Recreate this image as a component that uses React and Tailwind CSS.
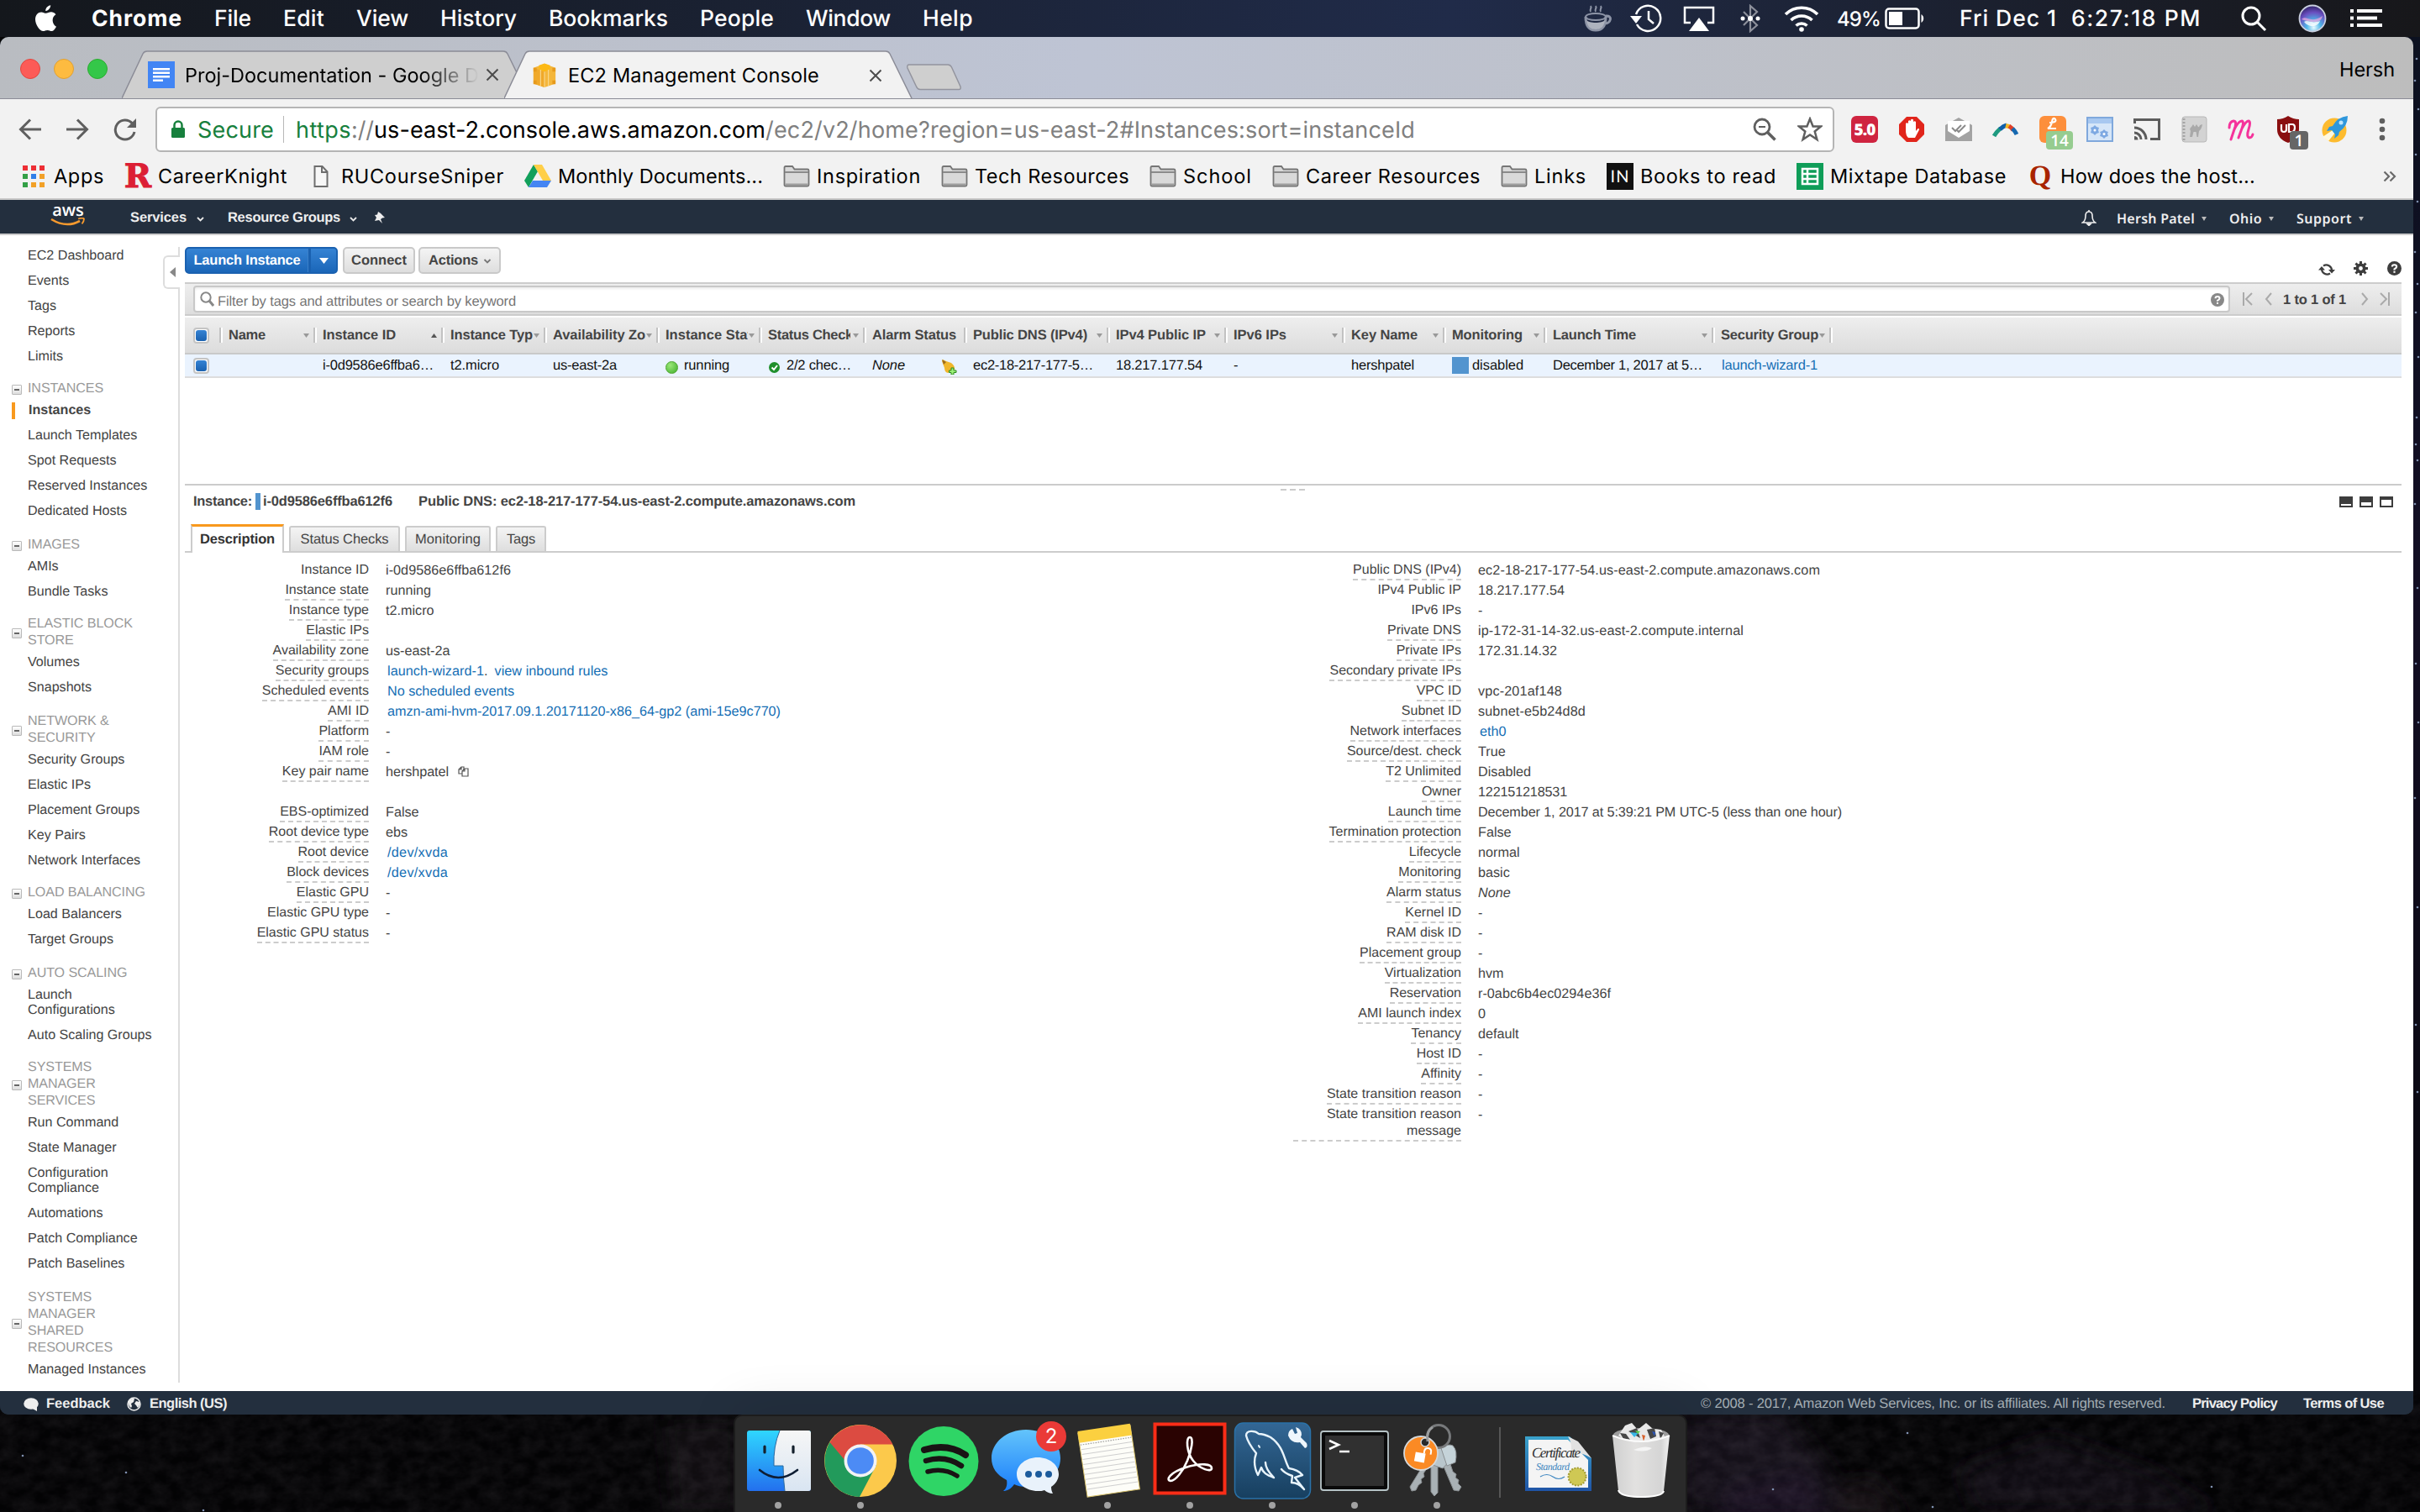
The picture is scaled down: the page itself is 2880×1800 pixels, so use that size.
import React, { useLayoutEffect, useRef } from "react";

/* Text that is tracked so that it fills exactly `w` pixels. */
function Fit({ w, className = "", children }) {
  const ref = useRef(null);
  useLayoutEffect(() => {
    const el = ref.current;
    el.style.letterSpacing = "0px";
    const natural = el.getBoundingClientRect().width;
    const n = el.textContent.length;
    el.style.letterSpacing = `${(w - natural) / n}px`;
  }, [w, children]);
  return (
    <span ref={ref} className={"inline-block shrink-0 whitespace-pre " + className}>
      {children}
    </span>
  );
}

/* ---------- desktop ---------- */

const stars = [
  [2876, 70], [2874, 96], [2878, 130], [2875, 184], [2877, 240], [2874, 300], [2877, 338], [2875, 372], [2878, 425],
  [2876, 497], [2875, 529], [2877, 548], [2874, 600], [2877, 700], [2875, 790], [2878, 860], [2874, 950], [2877, 1080],
  [2875, 1220], [2877, 1300], [2110, 1773], [2270, 1706], [2300, 1794], [2632, 1770], [150, 1753], [242, 1798], [27, 1733],
];

function Wallpaper() {
  return (
    <svg className="absolute inset-0" width="2880" height="1800" viewBox="0 0 2880 1800" aria-hidden="true">
      <defs>
        <filter id="grain" x="0" y="0" width="100%" height="100%" colorInterpolationFilters="sRGB">
          <feTurbulence type="fractalNoise" baseFrequency="0.05 0.07" numOctaves="4" seed="4" />
          <feColorMatrix values="0.2 0 0 0 -0.055  0.19 0 0 0 -0.055  0.2 0 0 0 -0.05  0 0 0 0 0.5" />
        </filter>
        <filter id="soft"><feGaussianBlur stdDeviation="12" /></filter>
        <linearGradient id="edge" x1="0" y1="0" x2="0" y2="1">
          <stop offset="0" stopColor="#0c1120" />
          <stop offset="0.4" stopColor="#130e24" />
          <stop offset="1" stopColor="#07070b" />
        </linearGradient>
      </defs>
      <rect width="2880" height="1800" fill="#060607" />
      <rect x="2860" y="40" width="20" height="1650" fill="url(#edge)" />
      <g filter="url(#soft)">
        <path d="M2000 1680H2120L2170 1740 2200 1800H2000Z" fill="#2a2230" />
        <path d="M2060 1770L2150 1750 2180 1810H2040Z" fill="#32243f" />
        <path d="M2180 1770L2230 1760 2270 1810H2190Z" fill="#261f22" />
        <path d="M2330 1750L2440 1710 2560 1750 2640 1800H2350Z" fill="#1c1820" />
        <path d="M790 1690H880V1800H800Z" fill="#221e24" />
      </g>
      <rect y="1660" width="2880" height="140" filter="url(#grain)" />
      {stars.map(([x, y]) => (
        <circle key={x + "-" + y} cx={x} cy={y} r="1.3" fill="#7f90b0" />
      ))}
    </svg>
  );
}

/* ---------- menu bar ---------- */

const menus = [
  ["Chrome", 108], ["File", 44], ["Edit", 49], ["View", 62], ["History", 91],
  ["Bookmarks", 142], ["People", 88], ["Window", 101], ["Help", 60],
];

function MenuBar() {
  return (
    <div className="relative flex h-11 w-full shrink-0 items-center bg-linear-to-r from-[#14171c] via-[#202b49] via-60% to-[#17171a] pl-[41px] text-[26.5px] text-white">
      <svg width="28" height="32" viewBox="0 0 28 32" fill="#fff">
        <path d="M19.2 0.3c.3 2.600-2.800 6.900-5.900 6.600C12.900 4 16.100.700 19.200.3zM26 25.800c-1.600 3-3.400 5.300-5.500 5.300-1.900 0-2.600-1.200-5-1.200-2.500 0-3.300 1.200-5 1.200C6.100 31.100 1 22.800 1 17c0-5.500 3.500-8.600 7.100-8.600 2.200 0 4.100 1.400 5.700 1.400 1.500 0 3.600-1.500 6.200-1.500 1.700 0 4 .8 5.400 2.900-5.600 3.300-4.500 11.600.6 14.600z" />
      </svg>
      <div className="ml-10 flex gap-[38px] pt-[2px]">
        {menus.map(([label, w], i) => (
          <Fit key={label} w={w} className={i === 0 ? "font-bold" : "font-medium"}>{label}</Fit>
        ))}
      </div>
      <div className="ml-auto flex h-11 items-center pr-[45px]">
        <svg width="40" height="34" viewBox="0 0 40 34" fill="none" stroke="#8d94a6">
          <ellipse cx="17" cy="15" rx="12" ry="4" strokeWidth="2" />
          <path d="M5 15c0 10 4 16 12 16s12-6 12-16M29 14c8-1 7 9-2 9" strokeWidth="3" />
          <path d="M6 19c3 4 19 4 22 0-1 7-4 11-11 11S7 26 6 19z" fill="#aeb3be" stroke="none" />
          <path d="M11 9c-2-3 2-4 0-7M17 9c-2-3 2-4 0-7M23 9c-2-3 2-4 0-7" strokeWidth="2" />
        </svg>
        <svg className="ml-[18px]" width="40" height="34" viewBox="0 0 40 34" fill="none" stroke="#fff" strokeWidth="2.500">
          <path d="M7 12A15 15 0 1 1 8 24" />
          <path d="M22 8v10l6 5" />
          <path d="M0 14h14l-7 9z" fill="#fff" stroke="none" />
        </svg>
        <svg className="ml-[22px]" width="40" height="32" viewBox="0 0 40 32">
          <path d="M10 21H3V3h34v18h-7" fill="none" stroke="#fff" strokeWidth="2.500" />
          <path d="M20 15L32 31H8z" fill="#fff" />
        </svg>
        <svg className="ml-[28px]" width="26" height="34" viewBox="0 0 26 34">
          <path d="M5 9l16 16-8 7V2l8 7L5 25" fill="none" stroke="#8d909b" strokeWidth="2.200" />
          <circle cx="4" cy="17" r="2.500" fill="#fff" /><circle cx="13" cy="17" r="3" fill="#fff" /><circle cx="22" cy="17" r="2.500" fill="#fff" />
        </svg>
        <svg className="ml-[26px]" width="44" height="32" viewBox="0 0 44 32" fill="none" stroke="#fff" strokeWidth="3.600">
          <path d="M3 11a27 27 0 0 1 38 0M9.500 18a18 18 0 0 1 25 0M15.500 24.500a9.500 9.500 0 0 1 13 0" />
          <circle cx="22" cy="29" r="2.800" fill="#fff" stroke="none" />
        </svg>
        <Fit w={52} className="ml-5 pt-px text-[24px] font-medium">49%</Fit>
        <svg className="ml-[5px]" width="48" height="26" viewBox="0 0 48 26">
          <rect x="1.500" y="1.500" width="39" height="23" rx="3.500" fill="none" stroke="#fff" strokeWidth="2.500" />
          <rect x="5" y="5" width="16" height="16" fill="#fff" />
          <path d="M43.500 8a6 6 0 0 1 0 10z" fill="#fff" />
        </svg>
        <Fit w={116} className="ml-[41px] pt-[2px] font-medium">Fri Dec 1</Fit>
        <Fit w={155} className="ml-[17px] pt-[2px] font-medium">6:27:18 PM</Fit>
        <svg className="ml-[46px]" width="32" height="32" viewBox="0 0 32 32" fill="none" stroke="#fff" strokeWidth="3">
          <circle cx="13" cy="13" r="10" /><path d="M20 20l10 10" />
        </svg>
        <svg className="ml-[37px]" width="34" height="34" viewBox="0 0 34 34">
          <defs>
            <radialGradient id="siri" cx="0.55" cy="0.85" r="0.9">
              <stop offset="0" stopColor="#e9fbff" /><stop offset="0.3" stopColor="#4fb6e8" />
              <stop offset="0.65" stopColor="#6a4fc0" /><stop offset="1" stopColor="#241a55" />
            </radialGradient>
          </defs>
          <circle cx="17" cy="17" r="15.500" fill="url(#siri)" stroke="#c9cfdf" strokeWidth="1.800" />
          <path d="M4 18c6-6 10 6 25-4-2 10-14 8-25 4z" fill="#f6a8e0" opacity="0.7" />
          <path d="M7 21c5-3 8 3 19-1-3 8-14 8-19 1z" fill="#fff" opacity="0.8" />
        </svg>
        <svg className="ml-[28px]" width="38" height="22" viewBox="0 0 38 22" fill="#fff">
          <path d="M0 0h4v4H0zM8 0h30v4H8zM0 8.500h4v4H0zM8 8.500h24v4H8zM0 17h4v4H0zM8 17h30v4H8z" />
        </svg>
      </div>
    </div>
  );
}

/* ---------- browser chrome ---------- */

function TabShape({ fill, line }) {
  return (
    <svg className="absolute inset-0" width="486" height="57" viewBox="0 0 486 57" aria-hidden="true">
      <path d="M0 57L25 4Q26.500 1 30 1H454Q457.500 1 459 4L485 57" fill={fill} stroke={line} strokeWidth="1.500" />
    </svg>
  );
}

function CloseX({ className = "" }) {
  return (
    <svg className={className} width="16" height="16" viewBox="0 0 16 16" stroke="#4c4c4c" strokeWidth="2">
      <path d="M1.500 1.500l13 13M14.500 1.500l-13 13" />
    </svg>
  );
}

function TabStrip() {
  return (
    <div className="flex h-[74px] shrink-0 items-end border-b-[1.500px] border-[#8b8c97] bg-linear-to-r from-[#b9bcc1] via-[#bec4d4] via-45% to-[#bdbdbd]">
      <div className="flex gap-4 self-center pt-[2px] pl-6">
        <span className="size-6 rounded-full border border-[#e2463f] bg-[#fc5b57]" />
        <span className="size-6 rounded-full border border-[#e0a032] bg-[#fdbb40]" />
        <span className="size-6 rounded-full border border-[#2bac2f] bg-[#34c749]" />
      </div>
      <div className="relative ml-[17px] flex h-[57px] w-[486px] items-center">
        <TabShape fill="#cfcfcf" line="#8b8c97" />
        <svg className="relative ml-[31px]" width="32" height="32" viewBox="0 0 32 32">
          <rect width="32" height="32" fill="#4285f4" />
          <path d="M6 8h20v2.500H6zM6 12.500h20V15H6zM6 17h20v2.500H6zM6 21.500h12V24H6z" fill="#fff" />
        </svg>
        <div className="relative ml-[12px] h-8 w-[350px] overflow-hidden mask-r-from-80% text-[23.500px] leading-[33px]">
          <Fit w={350} className="text-black">Proj-Documentation - Google D</Fit>
        </div>
        <CloseX className="relative ml-[8px]" />
      </div>
      <div className="relative -mb-[2px] -ml-[31px] flex h-[59px] w-[486px] items-center">
        <TabShape fill="#f2f2f2" line="#8b8c97" />
        <svg className="relative ml-[33px]" width="30" height="30" viewBox="0 0 30 32">
          <path d="M1 6l14-5 14 5v20l-14 5L1 26z" fill="#f4b63b" />
          <path d="M1 6l14 5v20L1 26z" fill="#f0a92a" />
          <path d="M8 3l7-2.500L22 3v5l-7 3-7-3z" fill="#fdb913" />
          <path d="M1 6h4v5H1zM25 6h4v5h-4zM1 22h4v5H1zM25 22h4v5h-4z" fill="#e79a1c" />
          <path d="M10 8.500v21M15 11v20M20 8.500v21" stroke="#fbe0a0" strokeWidth="1" />
        </svg>
        <Fit w={299} className="relative ml-[13px] text-[23.500px]">EC2 Management Console</Fit>
        <CloseX className="relative ml-[59px]" />
      </div>
      <svg className="-ml-2 mb-[9px]" width="68" height="32" viewBox="0 0 68 32">
        <path d="M4 1H50Q53 1 54.500 4L65 27Q66 30.500 63 30.500H17Q14 30.500 12.500 27L2 5Q1 1 4 1Z" fill="#cfcfcf" stroke="#93949e" strokeWidth="1.500" />
      </svg>
      <Fit w={66} className="mr-[22px] ml-auto self-center pt-[4px] text-[23.500px]">Hersh</Fit>
    </div>
  );
}

function Extensions() {
  return (
    <div className="ml-5 flex items-center gap-6">
      <span className="flex size-8 items-center justify-center rounded-md bg-[#cf2440] font-['Open_Sans'] text-[19px] font-extrabold tracking-tighter text-white">5.0</span>
      <svg width="32" height="32" viewBox="0 0 32 32">
        <path d="M10 1h12l9 9v12l-9 9H10l-9-9V10z" fill="#e1251b" />
        <path d="M9 18V9q1.500-1.500 3 0v6-9q1.500-1.500 3 0v8-9.500q1.500-1.500 3 0V14 7q1.500-1.500 3 0v11l2.500-3q2-.5 1.500 1.500L20 26h-8q-3-3-3-8z" fill="#fff" />
      </svg>
      <svg width="32" height="28" viewBox="0 0 32 28">
        <path d="M0 9L16 0l16 9v19H0z" fill="#a3a3a3" />
        <path d="M3 4h26v12l-13 8L3 16z" fill="#fff" />
        <path d="M8 12l4 4 7-7M14 15l2 2 8-8" fill="none" stroke="#8a8a8a" strokeWidth="2" />
      </svg>
      <svg width="32" height="32" viewBox="0 0 32 32" fill="none" strokeWidth="5">
        <path d="M2 24Q5 19 10 14.500" stroke="#1e9a80" />
        <path d="M9 16q4-4 8-5" stroke="#0f5fa8" />
        <path d="M16 11.500l5 1.500" stroke="#f5b623" />
        <path d="M20 12q3 2 5 5" stroke="#e0402a" />
        <path d="M24 15q3 3 5 7" stroke="#1769b0" />
      </svg>
      <div className="relative size-8">
        <div className="flex size-8 items-start justify-center rounded-md bg-[#fd8f3c]">
          <svg width="18" height="20" viewBox="0 0 18 20" fill="none" stroke="#fff" strokeWidth="2.200"><path d="M5 8q9 0 7-4-3-3-4 3-1 6-5 8h10" /></svg>
        </div>
        <span className="absolute top-[18px] left-2 flex h-[22px] w-8 items-center justify-center rounded-sm bg-[#96cc90] font-['Open_Sans'] text-[19px] font-semibold text-white">14</span>
      </div>
      <svg width="32" height="30" viewBox="0 0 32 30">
        <rect x="1" y="1" width="30" height="28" fill="#d6e6f8" stroke="#7fa8dc" strokeWidth="2" />
        <rect x="2" y="2" width="28" height="6" fill="#a8c8f0" />
        <path d="M10 10l2 2 3 1-1 3 1 3-3 1-2 2-2-2-3-1 1-3-1-3 3-1zM21 15l2 2 3 1-1 2 1 3-3 1-2 2-2-2-3-1 1-3-1-2 3-1z" fill="#7ea9e2" />
        <circle cx="10" cy="16" r="1.500" fill="#fff" /><circle cx="21" cy="20.500" r="1.500" fill="#fff" />
      </svg>
      <svg width="32" height="26" viewBox="0 0 32 26" fill="none" stroke="#5c5c5c" strokeWidth="3">
        <path d="M1.500 6V1.500h29v23H20" />
        <path d="M1 11a14 14 0 0 1 14 14M1 17a8 8 0 0 1 8 8" />
        <path d="M1 21a4.500 4.500 0 0 1 4.500 4.500H1z" fill="#5c5c5c" stroke="none" />
      </svg>
      <svg width="32" height="32" viewBox="0 0 32 32">
        <rect x="2" y="1" width="29" height="30" rx="3" fill="#d3d3d3" stroke="#b7b7b7" />
        <path d="M4 3v26" stroke="#a5a5a5" strokeWidth="3" strokeDasharray="2 2" />
        <path d="M11 25l1-7q-2-3 1-5l2-3 2 3 2-3 2 3q1 1 2-2l3-1q-1 6-4 8l-1 7h-1.500l-1-6h-3l-1.500 6z" fill="#a9a9a9" />
      </svg>
      <svg width="32" height="28" viewBox="0 0 32 28" fill="none" stroke="#f5339b" strokeWidth="3" strokeLinecap="round">
        <path d="M2 12q0-7 5-8 4 0 2 7L4 26M8 14q5-10 9-10 3 1 0 9l-4 11M17 13q5-9 8-9 3 1 0 10-3 9 1 10 3 0 4-4" />
      </svg>
      <div className="relative size-8">
        <svg width="32" height="32" viewBox="0 0 32 32">
          <path d="M16 0q6 4 13 4v12q0 11-13 16Q3 27 3 16V4q7 0 13-4z" fill="#8a0f10" />
          <path d="M8 10v6q0 3 3 3t3-3v-6M17 19v-9h4q3 0 3 4t-3 5z" fill="none" stroke="#fff" strokeWidth="2.200" />
        </svg>
        <span className="absolute top-[18px] left-[18px] flex h-[22px] w-[22px] items-center justify-center rounded-sm bg-[#666] font-['Open_Sans'] text-[19px] font-semibold text-white">1</span>
      </div>
      <svg width="32" height="32" viewBox="0 0 32 32">
        <circle cx="15" cy="17" r="14.500" fill="#fdbb2f" />
        <path d="M1 25l12-8 3 3-8 10z" fill="#fff8e0" />
        <path d="M31 0q-12 1-18 12l-4 1-3 5 6-1 4 5-1 5 5-4 1-4Q31 12 31 0z" fill="#2f97dc" />
        <circle cx="23" cy="8" r="2.500" fill="#bfe4fb" />
      </svg>
    </div>
  );
}

function AddressBar() {
  return (
    <div className="flex h-[64px] shrink-0 items-center bg-[#f2f2f2] pt-2 text-[27px]">
      <svg className="ml-[22px]" width="28" height="26" viewBox="0 0 28 26" fill="none" stroke="#5f5f5f" strokeWidth="3">
        <path d="M27 13H3M14 1.500L2.500 13 14 24.500" />
      </svg>
      <svg className="ml-[28px]" width="28" height="26" viewBox="0 0 28 26" fill="none" stroke="#5f5f5f" strokeWidth="3">
        <path d="M1 13h24M14 1.500L25.500 13 14 24.500" />
      </svg>
      <svg className="ml-[28px]" width="30" height="28" viewBox="0 0 30 28" fill="none" stroke="#5f5f5f" strokeWidth="3">
        <path d="M23.500 7A11.500 11.500 0 1 0 26 17" />
        <path d="M28 1v11H17z" fill="#5f5f5f" stroke="none" />
      </svg>
      <div className="ml-[21px] flex h-[54px] w-[1998px] items-center rounded-md border-2 border-[#b5b5b5] bg-white">
        <svg className="ml-[16px]" width="18" height="22" viewBox="0 0 18 22">
          <rect x="1" y="9" width="16" height="12" rx="1.500" fill="#17803d" />
          <path d="M4.500 10V6a4.500 4.500 0 0 1 9 0v4" fill="none" stroke="#17803d" strokeWidth="2.500" />
        </svg>
        <Fit w={91} className="ml-[14px] pt-[2px] text-[#17803d]">Secure</Fit>
        <span className="ml-[11px] h-8 w-px bg-[#b8b8b8]" />
        <Fit w={66} className="ml-[14px] pt-[2px] text-[#17803d]">https</Fit>
        <Fit w={27} className="pt-[2px] text-[#808080]">://</Fit>
        <Fit w={466} className="pt-[2px] text-black">us-east-2.console.aws.amazon.com</Fit>
        <Fit w={773} className="pt-[2px] text-[#808080]">/ec2/v2/home?region=us-east-2#Instances:sort=instanceId</Fit>
        <svg className="ml-auto" width="28" height="28" viewBox="0 0 28 28" fill="none" stroke="#5f5f5f" strokeWidth="2.800">
          <circle cx="11" cy="11" r="9" /><path d="M17.500 17.500l9 9" strokeWidth="3.500" /><path d="M7 11h8" strokeWidth="2" />
        </svg>
        <svg className="mr-[12px] ml-[25px]" width="30" height="30" viewBox="0 0 30 30">
          <path d="M15 2.500l3.600 9H28l-7.300 6 2.700 9.500L15 21.500 6.600 27l2.700-9.500L2 11.500h9.400z" fill="none" stroke="#5f5f5f" strokeWidth="2.500" />
        </svg>
      </div>
      <Extensions />
      <svg className="ml-[36px]" width="8" height="28" viewBox="0 0 8 28" fill="#5f5f5f">
        <circle cx="4" cy="4" r="3.300" /><circle cx="4" cy="14" r="3.300" /><circle cx="4" cy="24" r="3.300" />
      </svg>
    </div>
  );
}

const icon32 = "shrink-0 size-8";

function FolderIcon() {
  return (
    <svg className={icon32} viewBox="0 0 32 32">
      <path d="M1.500 26V5.500Q1.500 4 3 4h8l2.500 3.500H29q1.500 0 1.500 1.500v17q0 1.500-1.500 1.500H3Q1.500 27.500 1.500 26z" fill="#d9d9d9" stroke="#757575" strokeWidth="1.800" />
      <path d="M2 11h28" stroke="#8a8a8a" strokeWidth="1.800" />
      <path d="M2.500 24.500h27v2h-27z" fill="#9b9b9b" />
    </svg>
  );
}

const appDots = ["#ed2f35", "#ed2f35", "#ed2f35", "#34a047", "#2f7fe8", "#f2a128", "#34a047", "#f2a128", "#f2a128"];

const bookmarks = [
  { label: "Apps", w: 60, icon: (
    <svg className={icon32} viewBox="0 0 32 32">
      {appDots.map((c, i) => <rect key={i} x={3 + (i % 3) * 10} y={3 + Math.floor(i / 3) * 10} width="6" height="6" fill={c} />)}
    </svg>
  ) },
  { label: "CareerKnight", w: 154, icon: (
    <span className="flex size-8 items-center justify-center font-['DejaVu_Serif'] text-[39px] leading-8 font-bold text-[#dc1f35] [-webkit-text-stroke:1px_#dc1f35]">R</span>
  ) },
  { label: "RUCourseSniper", w: 194, icon: (
    <svg className={icon32} viewBox="0 0 32 32"><path d="M8.500 4h9l6 6.500V28h-15zM17 4v7h6.500" fill="#f7f7f7" stroke="#6e6e6e" strokeWidth="2" /></svg>
  ) },
  { label: "Monthly Documents...", w: 244, icon: (
    <svg className={icon32} viewBox="0 0 32 32">
      <path d="M11 2L0 21l5 8L16 10z" fill="#11a05b" /><path d="M11 2h10l11 19H22z" fill="#ffcf48" /><path d="M10 21h22l-5 8H5z" fill="#4585f3" />
    </svg>
  ) },
  { label: "Inspiration", w: 124 },
  { label: "Tech Resources", w: 184 },
  { label: "School", w: 82 },
  { label: "Career Resources", w: 208 },
  { label: "Links", w: 62 },
  { label: "Books to read", w: 162, icon: (
    <span className="flex size-8 items-center justify-center bg-[#111] font-['Lato'] text-[20px] tracking-[1px] text-white">IN</span>
  ) },
  { label: "Mixtape Database", w: 210, icon: (
    <svg className={icon32} viewBox="0 0 32 32">
      <rect width="32" height="32" fill="#0f9d58" />
      <path d="M7 7h18v18H7zM7 13h18M7 19h18M13 7v18" fill="none" stroke="#fff" strokeWidth="2.500" />
    </svg>
  ) },
  { label: "How does the host...", w: 232, icon: (
    <span className="flex size-8 items-center justify-center font-['Liberation_Serif'] text-[34px] leading-8 font-bold text-[#a82400]">Q</span>
  ) },
];

function BookmarksBar() {
  return (
    <div className="flex h-[56px] shrink-0 items-center gap-6 border-b-2 border-[#c8c8c8] bg-[#f2f2f2] pt-px pl-6 text-[23.500px] text-black">
      {bookmarks.map((b) => (
        <div key={b.label} className="flex items-center gap-2">
          {b.icon ?? <FolderIcon />}
          <Fit w={b.w}>{b.label}</Fit>
        </div>
      ))}
      <svg className="mr-[20px] ml-auto" width="16" height="14" viewBox="0 0 16 14" fill="none" stroke="#6a6a6a" strokeWidth="2.200">
        <path d="M1.500 1.500l5.500 5.500-5.500 5.500M8.500 1.500L14 7l-5.500 5.500" />
      </svg>
    </div>
  );
}

/* ---------- AWS console ---------- */

function Chevron({ className = "", color = "#e8e8e8", size = "9" }) {
  return (
    <svg className={className} width={size} height="6" viewBox="0 0 9 6" fill="none" stroke={color} strokeWidth="1.800"><path d="M1 1l3.500 3.500L8 1" /></svg>
  );
}

function NavCaret({ className = "" }) {
  return <svg className={className} width="6" height="5" viewBox="0 0 6 5"><path d="M0 0h6L3 5z" fill="#bbb" /></svg>;
}

function AwsNav() {
  return (
    <div className="flex h-[42px] shrink-0 items-center border-b-2 border-[#ccc] bg-[#232f3e] pt-[2px] text-[16.500px] font-bold text-[#eee]">
      <div className="ml-[60px] flex h-9 w-[42px] flex-col">
        <span className="h-[18px] text-center font-['Open_Sans'] text-[20px] leading-[17px] font-semibold text-white">aws</span>
        <svg width="42" height="12" viewBox="0 0 42 12">
          <path d="M1 2q18 11 34 2" fill="none" stroke="#f79a2e" strokeWidth="2.600" />
          <path d="M33 1.500q6-1.500 7 0 0 3-2.500 6" fill="none" stroke="#f79a2e" strokeWidth="1.800" />
        </svg>
      </div>
      <Fit w={67} className="ml-[53px]">Services</Fit>
      <Chevron className="mt-1 ml-[12px]" />
      <Fit w={134} className="ml-[28px]">Resource Groups</Fit>
      <Chevron className="mt-1 ml-[11px]" />
      <svg className="ml-[19px]" width="14" height="14" viewBox="0 0 14 14" fill="#eee">
        <path d="M6 0l3 2 5 5-3 .5L9 9l2 5-4-4-5 1 2-4-2-3 3-.5z" />
      </svg>
      <div className="ml-auto flex items-center pt-[2px] pr-[59px] font-['Noto_Sans'] text-[16px] font-semibold">
        <svg className="-mt-[2px]" width="18" height="19" viewBox="0 0 18 19" fill="none" stroke="#eee" strokeWidth="1.600">
          <path d="M9 2q-4 0-4 5-.2 6-3.500 8h15Q13.200 13 13 7q0-5-4-5z" /><path d="M9 0v2M7 16.500h4l-2 2z" fill="#eee" />
        </svg>
        <Fit w={93} className="ml-[24px]">Hersh Patel</Fit>
        <NavCaret className="ml-[8px]" />
        <Fit w={39} className="ml-[27px]">Ohio</Fit>
        <NavCaret className="ml-[8px]" />
        <Fit w={66} className="ml-[27px]">Support</Fit>
        <NavCaret className="ml-[8px]" />
      </div>
    </div>
  );
}

const sections = [
  { title: null, items: ["EC2 Dashboard", "Events", "Tags", "Reports", "Limits"] },
  { title: ["INSTANCES"], gap: "pt-[7px]", items: ["Instances", "Launch Templates", "Spot Requests", "Reserved Instances", "Dedicated Hosts"] },
  { title: ["IMAGES"], gap: "pt-[9px]", items: ["AMIs", "Bundle Tasks"] },
  { title: ["ELASTIC BLOCK", "STORE"], gap: "pt-[7px]", items: ["Volumes", "Snapshots"] },
  { title: ["NETWORK &", "SECURITY"], gap: "pt-[9px]", items: ["Security Groups", "Elastic IPs", "Placement Groups", "Key Pairs", "Network Interfaces"] },
  { title: ["LOAD BALANCING"], gap: "pt-[7px]", items: ["Load Balancers", "Target Groups"] },
  { title: ["AUTO SCALING"], gap: "pt-[9px]", items: ["Launch\nConfigurations", "Auto Scaling Groups"] },
  { title: ["SYSTEMS", "MANAGER", "SERVICES"], gap: "pt-[7px]", items: ["Run Command", "State Manager", "Configuration\nCompliance", "Automations", "Patch Compliance", "Patch Baselines"] },
  { title: ["SYSTEMS", "MANAGER", "SHARED", "RESOURCES"], gap: "pt-[9px]", items: ["Managed Instances"] },
];

function Sidebar() {
  return (
    <div className="flex w-[214px] shrink-0 pt-[14px] pb-[10px]">
      <nav className="w-[212px] shrink-0 pt-[1px] text-[16.100px] leading-[18px] text-[#444]">
        {sections.map((s, i) => (
          <div key={i} className={s.gap}>
            {s.title && (
              <div className="mb-[7px] flex items-center pl-[14px] leading-5 text-[#999]">
                <span className="mt-[3px] mr-[7px] flex size-3 shrink-0 items-center justify-center rounded-[1px] border border-[#b9b9b9] bg-linear-to-b from-white to-[#ddd]">
                  <span className="h-[2px] w-1.5 bg-[#666]" />
                </span>
                <span className="tracking-[-0.1px]">{s.title.map((t) => <span key={t} className="block whitespace-nowrap">{t}</span>)}</span>
              </div>
            )}
            {s.items.map((t) =>
              t === "Instances" ? (
                <div key={t} className="relative mb-3 pl-[34px] font-bold">
                  <span className="absolute top-0 left-[14px] h-5 w-1 bg-[#f8991d]" />
                  {t}
                </div>
              ) : (
                <div key={t} className="mb-3 pl-[33px] whitespace-pre">{t}</div>
              )
            )}
          </div>
        ))}
      </nav>
      <div className="relative w-[2px] shrink-0 bg-[#ddd]">
        <div className="absolute top-[10px] -left-[18px] flex h-10 w-5 items-center rounded-l-md border-2 border-r-0 border-[#ddd] bg-white pl-[6px]">
          <svg width="7" height="12" viewBox="0 0 7 12"><path d="M7 0v12L0 6z" fill="#888" /></svg>
        </div>
      </div>
    </div>
  );
}

function Question({ size, color, className = "" }) {
  return (
    <svg className={className} width={size} height={size} viewBox="0 0 16 16">
      <circle cx="8" cy="8" r="8" fill={color} />
      <path d="M5.500 6.200Q5.500 4 8 4t2.500 2.200Q10.500 7.500 8 8.800v1" fill="none" stroke="#fff" strokeWidth="2" />
      <rect x="7" y="11" width="2" height="2" fill="#fff" />
    </svg>
  );
}

const grayButton = "flex h-8 items-center rounded-[5px] border-2 border-[#c9c9c9] bg-linear-to-b from-[#f4f4f4] to-[#dedede] text-[#444]";

function ActionBar() {
  return (
    <div className="flex h-[56px] shrink-0 items-start pt-[14px] text-[16.500px] font-bold">
      <div className="flex h-8 w-[182px] rounded-[5px] border-2 border-[#1a61b0] bg-linear-to-b from-[#3583d4] to-[#1a66b8] text-white">
        <div className="flex w-[145px] items-center justify-center border-r border-[#3b80c9] pt-px"><Fit w={127}>Launch Instance</Fit></div>
        <div className="flex flex-1 items-center justify-center border-l-[3px] border-[#1a61b0]">
          <svg width="11" height="7" viewBox="0 0 11 7"><path d="M0 0h11L5.500 7z" fill="#fff" /></svg>
        </div>
      </div>
      <div className={grayButton + " ml-[6px] w-[86px] justify-center pt-px"}><Fit w={66}>Connect</Fit></div>
      <div className={grayButton + " ml-1 w-[98px] pt-px pl-[10px]"}>
        <Fit w={59}>Actions</Fit>
        <Chevron className="ml-[6px]" color="#777" size="10" />
      </div>
      <div className="ml-auto flex items-center pt-[15px]">
        <svg className="mt-1" width="20" height="16" viewBox="0 0 20 16" fill="none" stroke="#3d3d3d" strokeWidth="2.200">
          <path d="M6 3.500A6.500 6.500 0 0 1 16 9M14 12.500A6.500 6.500 0 0 1 4 7" />
          <path d="M12 8h8l-4 4.500zM0 8.500h8L4 4z" fill="#3d3d3d" stroke="none" />
        </svg>
        <svg className="ml-[22px]" width="17" height="17" viewBox="0 0 16 16">
          <circle cx="8" cy="8" r="4" fill="none" stroke="#3d3d3d" strokeWidth="3.500" />
          <path d="M8 0v3M8 13v3M0 8h3M13 8h3M2.300 2.300l2.200 2.200M11.500 11.500l2.200 2.200M13.700 2.300l-2.200 2.200M4.500 11.500l-2.200 2.200" stroke="#3d3d3d" strokeWidth="2.800" />
        </svg>
        <Question size="17" color="#3d3d3d" className="ml-[23px]" />
      </div>
    </div>
  );
}

function PageArrow({ d, className = "" }) {
  return <svg className={className} width="12" height="16" viewBox="0 0 12 16" fill="none" stroke="#aaa" strokeWidth="2"><path d={d} /></svg>;
}

function FilterBar() {
  return (
    <div className="flex h-10 shrink-0 items-center border-y-2 border-[#ccc] bg-linear-to-b from-[#eee] to-[#ddd] pl-[10px]">
      <div className="flex h-8 w-[2424px] items-center rounded-[4px] border-2 border-[#c8c8c8] bg-white pl-[6px] shadow-[inset_0_2px_3px_rgba(0,0,0,0.08)]">
        <svg width="17" height="18" viewBox="0 0 17 18" fill="none" stroke="#888"><circle cx="7" cy="7" r="5.700" strokeWidth="2" /><path d="M11 11l5 6" strokeWidth="3" /></svg>
        <Fit w={355} className="mt-[6px] ml-1 text-[16.500px] text-[#757575]">Filter by tags and attributes or search by keyword</Fit>
        <Question size="16" color="#888" className="mt-px mr-[5px] ml-auto" />
      </div>
      <PageArrow className="ml-[15px]" d="M1 0v16M11 1L4 8l7 7" />
      <PageArrow className="ml-[12px]" d="M10 1L4 8l6 7" />
      <Fit w={75} className="mt-[2px] ml-[12px] text-[16.500px] font-bold text-[#444]">1 to 1 of 1</Fit>
      <PageArrow className="ml-[17px]" d="M2 1l6 7-6 7" />
      <PageArrow className="ml-[11px]" d="M1 1l7 7-7 7M11 0v16" />
    </div>
  );
}

const columns = [
  { label: "Name", w: 44, box: "w-[112px]" },
  { label: "Instance ID", w: 87, box: "w-[152px]", sorted: true },
  { label: "Instance Typ", w: 98, box: "w-[122px]" },
  { label: "Availability Zo", w: 110, box: "w-[134px]" },
  { label: "Instance Stat", w: 103, box: "w-[122px]", clip: true },
  { label: "Status Check", w: 101, box: "w-[124px]", clip: true },
  { label: "Alarm Status", w: 100, box: "w-[120px]", plain: true },
  { label: "Public DNS (IPv4)", w: 136, box: "w-[170px]" },
  { label: "IPv4 Public IP", w: 107, box: "w-[140px]" },
  { label: "IPv6 IPs", w: 63, box: "w-[140px]" },
  { label: "Key Name", w: 79, box: "w-[120px]" },
  { label: "Monitoring", w: 84, box: "w-[120px]" },
  { label: "Launch Time", w: 99, box: "w-[200px]" },
  { label: "Security Group", w: 116, box: "w-[140px]" },
];

const cells = [
  null,
  <Fit w={132}>i-0d9586e6ffba6…</Fit>,
  <Fit w={58}>t2.micro</Fit>,
  <Fit w={76}>us-east-2a</Fit>,
  <>
    <span className="mt-1 mr-[7px] size-[15px] rounded-full border border-[#4da52e] bg-radial-[at_35%_30%] from-[#9be87a] to-[#3fae2a]" />
    <Fit w={54}>running</Fit>
  </>,
  <>
    <svg className="mt-1 mr-2 ml-[1px]" width="13" height="13" viewBox="0 0 13 13">
      <circle cx="6.500" cy="6.500" r="6.500" fill="#1f8f2c" /><path d="M3.500 6.500L6 9l4-5" fill="none" stroke="#fff" strokeWidth="2" />
    </svg>
    <Fit w={77}>2/2 chec…</Fit>
  </>,
  <>
    <Fit w={39} className="italic">None</Fit>
    <svg className="mt-1 ml-auto mr-[8px]" width="18" height="18" viewBox="0 0 18 18">
      <path d="M1 0l4 2 6 2q5 4 4 8l-8 4q-4-1-4-6L0 2z" fill="#f0b62c" /><path d="M0 0l5 3-3 3z" fill="#9a6a1d" />
      <path d="M11 10h3v3h3v2.500h-3V18h-3v-2.500H8.500V13H11z" fill="#9bf07a" stroke="#2c8a1c" strokeWidth="1" />
    </svg>
  </>,
  <Fit w={143}>ec2-18-217-177-5…</Fit>,
  <Fit w={103}>18.217.177.54</Fit>,
  "-",
  <Fit w={75}>hershpatel</Fit>,
  <>
    <span className="mr-[4px] size-5 bg-[#5294cf]" />
    <Fit w={61}>disabled</Fit>
  </>,
  <Fit w={178}>December 1, 2017 at 5…</Fit>,
  <Fit w={114} className="ml-px text-[#146eb4]">launch-wizard-1</Fit>,
];

function Checkbox() {
  return (
    <span className="flex size-[19px] items-center justify-center rounded-[4px] border-2 border-[#c4c4c4] bg-white">
      <span className="h-[13px] w-[13px] rounded-[3px] bg-linear-to-b from-[#3583d4] to-[#1a62b0]" />
    </span>
  );
}

function SortArrow({ up }) {
  return (
    <svg className="mr-[5px] ml-auto shrink-0" width="7" height="5" viewBox="0 0 7 5"><path d={up ? "M3.500 0L7 5H0z" : "M0 0h7L3.500 5z"} fill={up ? "#555" : "#999"} /></svg>
  );
}

function InstanceTable() {
  return (
    <div className="mt-0.5 h-[198px] shrink-0 text-[16.500px]">
      <div className="flex h-11 items-center border-b-2 border-[#c9c9c9] bg-linear-to-b from-[#eee] to-[#dcdcdc] font-bold text-[#444]">
        <div className="w-[41px] shrink-0 pl-[10px]"><Checkbox /></div>
        {columns.map((c) => (
          <div key={c.label} className={"flex shrink-0 items-center " + c.box}>
            <span className="mr-[7px] h-[18px] w-1 shrink-0 border-r-2 border-l-2 border-r-white border-l-[#c2c2c2]" />
            {c.clip ? (
              <span className="flex w-[98px] overflow-hidden"><Fit w={c.w}>{c.label}</Fit></span>
            ) : (
              <Fit w={c.w}>{c.label}</Fit>
            )}
            {!c.plain && <SortArrow up={c.sorted} />}
          </div>
        ))}
        <span className="h-[18px] w-1 border-r-2 border-l-2 border-r-white border-l-[#c2c2c2]" />
      </div>
      <div className="flex h-7 items-center border-b-2 border-[#ddd] bg-[#eaf3fe] text-[#111]">
        <div className="w-[41px] shrink-0 pl-[10px]"><Checkbox /></div>
        {cells.map((cell, i) => (
          <div key={i} className={"flex h-6 shrink-0 items-center pl-[11px] " + columns[i].box}>{cell}</div>
        ))}
      </div>
    </div>
  );
}

function PaneIcon({ h }) {
  return (
    <svg width="16" height="13" viewBox="0 0 16 13"><rect width="16" height="13" fill="#3d3d3d" /><rect x="2" y={11 - h} width="12" height={h} fill="#fff" /></svg>
  );
}

function DetailHeader() {
  return (
    <div className="relative flex h-12 shrink-0 items-center border-t-2 border-[#ccc] pl-[10px] text-[16.500px] font-bold text-[#444]">
      <div className="absolute top-[4px] left-[1304px] flex gap-1">
        <span className="h-[2px] w-[7px] bg-[#ccc]" /><span className="h-[2px] w-[7px] bg-[#ccc]" /><span className="h-[2px] w-[7px] bg-[#ccc]" />
      </div>
      <Fit w={70} className="-mt-[8px]">Instance:</Fit>
      <span className="-mt-[8px] ml-[4px] h-5 w-[6px] bg-[#5294cf]" />
      <Fit w={154} className="-mt-[8px] ml-[3px]">i-0d9586e6ffba612f6</Fit>
      <Fit w={520} className="-mt-[8px] ml-[31px]">Public DNS: ec2-18-217-177-54.us-east-2.compute.amazonaws.com</Fit>
      <div className="-mt-[7px] mr-[10px] ml-auto flex gap-2"><PaneIcon h={2} /><PaneIcon h={4} /><PaneIcon h={7} /></div>
    </div>
  );
}

const tabStyle = "flex h-[30px] items-center justify-center rounded-t-[3px] border-2 border-b-0 border-[#ccc] bg-linear-to-b from-[#f4f4f4] to-[#dedede] pt-px";

function DetailTabs() {
  return (
    <div className="flex h-[34px] shrink-0 items-end gap-[6px] border-b-2 border-[#ccc] pl-[7px] text-[16.500px] text-[#444]">
      <div className="-mb-0.5 flex h-[34px] w-[111px] items-center justify-center border-x-2 border-t-[3px] border-x-[#ccc] border-t-[#f8991d] bg-white font-bold text-[#333]">
        <Fit w={89}>Description</Fit>
      </div>
      <div className={tabStyle + " w-[132px]"}><Fit w={105}>Status Checks</Fit></div>
      <div className={tabStyle + " w-[102px]"}><Fit w={78}>Monitoring</Fit></div>
      <div className={tabStyle + " w-[60px]"}><Fit w={34}>Tags</Fit></div>
    </div>
  );
}

const link = "ml-[2px] text-[#146eb4]";

/* [label, value, underlined] */
const leftFields = [
  ["Instance ID", <Fit w={149}>i-0d9586e6ffba612f6</Fit>, false],
  ["Instance state", "running", true],
  ["Instance type", "t2.micro", true],
  ["Elastic IPs", "", true],
  ["Availability zone", "us-east-2a", true],
  ["Security groups", <><Fit w={115} className={link}>launch-wizard-1</Fit>.<Fit w={135} className="ml-2 text-[#146eb4]">view inbound rules</Fit></>, true],
  ["Scheduled events", <Fit w={151} className={link}>No scheduled events</Fit>, true],
  ["AMI ID", <Fit w={468} className={link}>amzn-ami-hvm-2017.09.1.20171120-x86_64-gp2 (ami-15e9c770)</Fit>, true],
  ["Platform", "-", true],
  ["IAM role", "-", true],
  ["Key pair name", (
    <>
      <Fit w={75}>hershpatel</Fit>
      <svg className="mb-[3px] ml-[11px] inline" width="13" height="13" viewBox="0 0 13 13" fill="#fff" stroke="#555" strokeWidth="1.200">
        <path d="M1 4l3-3h3v8H1zM4 1v3H1" /><path d="M5 6l3-3h4v9H5zM8 3v3H5" />
      </svg>
    </>
  ), true],
  null,
  ["EBS-optimized", "False", true],
  ["Root device type", "ebs", true],
  ["Root device", <Fit w={72} className={link}>/dev/xvda</Fit>, true],
  ["Block devices", <Fit w={72} className={link}>/dev/xvda</Fit>, true],
  ["Elastic GPU", "-", true],
  ["Elastic GPU type", "-", false],
  ["Elastic GPU status", "-", true],
];

const rightFields = [
  ["Public DNS (IPv4)", <Fit w={407}>ec2-18-217-177-54.us-east-2.compute.amazonaws.com</Fit>, true],
  ["IPv4 Public IP", <Fit w={103}>18.217.177.54</Fit>, false],
  ["IPv6 IPs", "-", false],
  ["Private DNS", <Fit w={316}>ip-172-31-14-32.us-east-2.compute.internal</Fit>, true],
  ["Private IPs", <Fit w={94}>172.31.14.32</Fit>, true],
  ["Secondary private IPs", "", true],
  ["VPC ID", <Fit w={100}>vpc-201af148</Fit>, true],
  ["Subnet ID", <Fit w={128}>subnet-e5b24d8d</Fit>, true],
  ["Network interfaces", <span className={link}>eth0</span>, true],
  ["Source/dest. check", "True", true],
  ["T2 Unlimited", "Disabled", true],
  ["Owner", <Fit w={106}>122151218531</Fit>, true],
  ["Launch time", <Fit w={433}>December 1, 2017 at 5:39:21 PM UTC-5 (less than one hour)</Fit>, true],
  ["Termination protection", "False", true],
  ["Lifecycle", "normal", true],
  ["Monitoring", "basic", true],
  ["Alarm status", <em>None</em>, true],
  ["Kernel ID", "-", true],
  ["RAM disk ID", "-", true],
  ["Placement group", "-", true],
  ["Virtualization", "hvm", true],
  ["Reservation", <Fit w={158}>r-0abc6b4ec0294e36f</Fit>, true],
  ["AMI launch index", "0", true],
  ["Tenancy", "default", true],
  ["Host ID", "-", true],
  ["Affinity", "-", true],
  ["State transition reason", "-", true],
  ["State transition reason message", "-", true],
];

function Fields({ rows, className }) {
  return (
    <div className={className}>
      {rows.map((row, i) =>
        row === null ? (
          <div key={i} className="h-6" />
        ) : (
          <div key={i} className="flex min-h-6 gap-5">
            <div className="flex w-[200px] justify-end text-right text-[16px]">
              <span className={row[2] ? "mb-[2px] border-b-2 border-dashed border-[#ccc]" : ""}>{row[0]}</span>
            </div>
            <div className="whitespace-nowrap">{row[1]}</div>
          </div>
        )
      )}
    </div>
  );
}

function Console() {
  return (
    <div className="flex h-[1376px] shrink-0 bg-white">
      <Sidebar />
      <main className="ml-[6px] flex w-[2638px] flex-col">
        <ActionBar />
        <FilterBar />
        <InstanceTable />
        <DetailHeader />
        <DetailTabs />
        <div className="flex pt-[11px] text-[16.200px] leading-5 text-[#444]">
          <Fields rows={leftFields} className="ml-[19px] w-[1300px]" />
          <Fields rows={rightFields} className="" />
        </div>
      </main>
    </div>
  );
}

function Footer() {
  return (
    <footer className="flex h-7 shrink-0 items-center bg-[#232f3e] pt-[3px] text-[16.500px] text-[#eee]">
      <svg className="ml-[28px]" width="18" height="16" viewBox="0 0 18 16"><ellipse cx="9" cy="7" rx="8.800" ry="6.800" fill="#eee" /><path d="M9 12l7-3v7z" fill="#eee" /></svg>
      <Fit w={76} className="ml-[9px] font-bold">Feedback</Fit>
      <svg className="ml-[20px]" width="17" height="17" viewBox="0 0 17 17">
        <circle cx="8.500" cy="8.500" r="7.500" fill="#232f3e" stroke="#eee" strokeWidth="1.500" />
        <path d="M2 5q3-4 7-3l-1 4-3 2 1 3-1 2Q1 10 2 5zM11 5l4 1q1 4-2 7l-2-3-2-2z" fill="#eee" />
      </svg>
      <Fit w={92} className="ml-[10px] font-bold">English (US)</Fit>
      <Fit w={553} className="ml-auto text-[#a3adb3]">© 2008 - 2017, Amazon Web Services, Inc. or its affiliates. All rights reserved.</Fit>
      <Fit w={101} className="ml-[32px] font-bold">Privacy Policy</Fit>
      <Fit w={96} className="mr-[35px] ml-[31px] font-bold">Terms of Use</Fit>
    </footer>
  );
}

/* ---------- dock ---------- */

const dockApps = [
  { name: "Finder", running: true, art: (
    <>
      <defs>
        <linearGradient id="fb" x1="0" y1="0" x2="0" y2="1"><stop offset="0" stopColor="#2fd6ff" /><stop offset="1" stopColor="#2370ee" /></linearGradient>
        <linearGradient id="fw" x1="0" y1="0" x2="0" y2="1"><stop offset="0" stopColor="#f6f6f6" /><stop offset="1" stopColor="#d9e5f2" /></linearGradient>
      </defs>
      <rect x="12" y="19" width="76" height="72" rx="3" fill="url(#fb)" />
      <path d="M51 19H85q3 0 3 3v66q0 3-3 3H57Q55 76 55 61H44Q43 38 51 19z" fill="url(#fw)" />
      <path d="M51 19Q43 38 44 61H55q0 15 2 30" fill="none" stroke="#2a6aa0" strokeWidth="1" />
      <path d="M33 38v7M67 38v7" stroke="#14202c" strokeWidth="3.200" strokeLinecap="round" />
      <path d="M27 66q22 18 45 0" fill="none" stroke="#0e1d33" strokeWidth="2.600" strokeLinecap="round" />
    </>
  ) },
  { name: "Chrome", running: true, art: (
    <>
      <circle cx="49" cy="55" r="43" fill="#fcc94b" />
      <path d="M49 55L12.500 33A43 43 0 0 0 48 98L68 60z" fill="#229a5b" />
      <path d="M12.500 33A43 43 0 0 1 87.500 35.500H49V55H31z" fill="#dc4b41" />
      <circle cx="49" cy="55" r="19.500" fill="#f3f3f3" /><circle cx="49" cy="55" r="15.800" fill="#4c8bf5" />
    </>
  ) },
  { name: "Spotify", running: false, art: (
    <>
      <circle cx="50" cy="55.500" r="41.500" fill="#2fd566" />
      <g fill="none" stroke="#191414" strokeLinecap="round">
        <path d="M27 42q28-8 49 6" strokeWidth="8" /><path d="M29 55q23-7 42 6" strokeWidth="6.500" /><path d="M31 68q19-5 35 5" strokeWidth="5.500" />
      </g>
    </>
  ) },
  { name: "Messages", running: false, badge: "2", art: (
    <>
      <defs><linearGradient id="msg" x1="0" y1="0" x2="0" y2="1"><stop offset="0" stopColor="#63c4fb" /><stop offset="1" stopColor="#1a7dfb" /></linearGradient></defs>
      <path d="M50 18c23 0 41 15 41 34S73 86 50 86c-6 0-10-1-14-3-4 6-9 8-13 8 4-3 5-8 4-13C15 72 9 63 9 52c0-19 18-34 41-34z" fill="url(#msg)" />
      <path d="M64 51c14 0 25 9 25 20 0 6-4 12-9 15 0 4 1 6 2 8-4 0-8-2-10-4-2 1-5 1-8 1-14 0-25-9-25-20s11-20 25-20z" fill="#e9f2fb" />
      <circle cx="53" cy="71" r="4" fill="#1c5b9c" /><circle cx="65" cy="71" r="4" fill="#1c5b9c" /><circle cx="77" cy="71" r="4" fill="#1c5b9c" />
    </>
  ) },
  { name: "Notes", running: true, art: (
    <g transform="rotate(-8.500 50 55)">
      <rect x="19" y="17" width="63" height="77" fill="#fdfdf8" stroke="#d8c26a" strokeWidth="1" />
      <rect x="19" y="15" width="63" height="14" fill="#fbd040" />
      {[37, 43, 49, 55, 61, 67, 73, 79, 85].map((y) => <path key={y} d={`M20 ${y}h61`} stroke="#cfcfcf" strokeWidth="1" />)}
      <path d="M20 31.500h61" stroke="#999" strokeWidth="1.200" strokeDasharray="1.500 1.500" />
    </g>
  ) },
  { name: "Acrobat", running: true, art: (
    <>
      <rect x="7.500" y="11.500" width="83" height="82" fill="#2a0302" stroke="#fa2d17" strokeWidth="4" />
      <path d="M49 27c5 0 2 16-3 28S32 79 26 79c-6-1-1-10 18-16s31-4 31 1-14 1-22-9-9-28-4-28z" fill="none" stroke="#fff" strokeWidth="2.600" />
    </>
  ) },
  { name: "MySQL Workbench", running: true, art: (
    <>
      <defs><linearGradient id="sql" x1="0" y1="0" x2="0" y2="1"><stop offset="0" stopColor="#336795" /><stop offset="1" stopColor="#173f5f" /></linearGradient></defs>
      <rect x="4.500" y="10" width="90" height="90" rx="10" fill="url(#sql)" stroke="#2a72a8" strokeWidth="1.500" />
      <path d="M87 89c-4-5-9-8-15-8l1-8c-6-2-10-4-13-8M87 89L76 75l9-3c-4-5-9-7-16-8-6-10-6-26-22-37-6-3-9-4-14-4-4-4-15-5-15 2 2 8 7 15 12 21-3 8-2 18 2 26l4-9c2 6 6 9 15 12-6-6-10-12-10-18" fill="none" stroke="#e8f4fc" strokeWidth="2.400" strokeLinejoin="round" strokeLinecap="round" />
      <path d="M32 36q3 0 3 4-3 0-3-4z" fill="#e8f4fc" />
      <path d="M68 25q0-6 5-8l3 6 3-1-2-7q7 2 7 9l-1 3 7 7q2 5-2 6l-6-7q-10 2-14-8z" fill="#eef6fc" />
    </>
  ) },
  { name: "Terminal", running: true, art: (
    <>
      <rect x="9" y="20" width="80" height="70" rx="3" fill="#0a0a0a" stroke="#b6c3c6" strokeWidth="1.800" />
      <rect x="14" y="25" width="70" height="60" fill="#303030" />
      <path d="M19 31l11 5-11 5" fill="none" stroke="#fff" strokeWidth="2.500" /><path d="M31 44h12" stroke="#fff" strokeWidth="2.500" />
    </>
  ) },
  { name: "Keychain", running: true, art: (
    <>
      <g stroke="#8a8f92" strokeWidth="1" fill="#a9b1b5">
        <path d="M36 55L17 86l2 5 5-1 3-6 4-3-1-4 4-3-1-4 10-14z" />
        <path d="M42 50v42l4 5 4-4V52zM52 50l17 40 6 1 3-5-4-4 1-4-4-3 1-4-4-3L60 44z" />
        <path d="M44 40q12-4 18 4 5 10-6 20l-12-4z" fill="#b9c6cc" /><path d="M54 40q8-6 14-3 6 6 3 20l-10 4z" fill="#c5d3d9" />
      </g>
      <circle cx="51" cy="26" r="13.500" fill="none" stroke="#77797b" strokeWidth="3" />
      <circle cx="30" cy="46" r="20" fill="#fb8a24" stroke="#d5d8da" strokeWidth="1.800" />
      <circle cx="35" cy="33" r="5" fill="#2a2a2a" stroke="#d5d8da" strokeWidth="1.500" />
      <path d="M38 32q-2-12 6-17" fill="none" stroke="#9a9c9e" strokeWidth="3" />
      <g transform="rotate(10 32 50)"><rect x="23" y="46" width="12" height="11" fill="#fff" /><path d="M33 46v-3q0-4 4-4t4 4v3" fill="none" stroke="#fff" strokeWidth="2" /></g>
    </>
  ) },
];

function DockItem({ name, running, badge, children }) {
  return (
    <div className="relative -mt-[2px] h-[116px] w-[98px] shrink-0" title={name}>
      <svg width="98" height="104" viewBox="0 0 98 104">{children}</svg>
      {badge && (
        <span className="absolute top-[8px] left-[62px] flex size-9 items-center justify-center rounded-full bg-[#ea3a37] text-[24px] text-white">{badge}</span>
      )}
      {running && <span className="absolute top-[104px] left-[45px] size-2 rounded-full bg-[#a2a2a2]" />}
    </div>
  );
}

function Dock() {
  return (
    <div className="absolute top-[1684px] left-[873px] flex h-[120px] w-[1135px] rounded-t-[10px] border-2 border-[#1c1c1c] bg-[#2a2a2a] pl-[2px] shadow-[0_-10px_60px_rgba(0,0,0,0.09)]">
      {dockApps.map((a) => (
        <DockItem key={a.name} name={a.name} running={a.running} badge={a.badge}>{a.art}</DockItem>
      ))}
      <span className="mt-[13px] ml-[25px] h-[84px] w-[2px] bg-[#565656]" />
      <div className="ml-[20px] flex">
        <DockItem name="Certificate">
          <defs><linearGradient id="cert" x1="0" y1="0" x2="0" y2="1"><stop offset="0" stopColor="#3aa3cc" /><stop offset="1" stopColor="#1f54a6" /></linearGradient></defs>
          <path d="M9 26H62L88 52V91H9z" fill="url(#cert)" />
          <path d="M13 30H60L84 54V87H13z" fill="#f4f4f4" />
          <path d="M60 26q6 10 3 20 12-2 25 6L72 32z" fill="#e2e2e2" />
          <text x="17" y="51" fontFamily="Liberation Serif" fontStyle="italic" fontSize="17" textLength="58" fill="#333">Certificate</text>
          <text x="22" y="66" fontFamily="Liberation Serif" fontStyle="italic" fontSize="12" textLength="40" fill="#3d86c0">Standard</text>
          <path d="M27 74q8-5 15 0t14 0" fill="none" stroke="#3d86c0" strokeWidth="1.200" />
          <circle cx="71" cy="74" r="10.500" fill="#cfc854" stroke="#a39c33" strokeWidth="2" strokeDasharray="2 1.500" />
        </DockItem>
        <DockItem name="Trash">
          <defs><linearGradient id="bin" x1="0" y1="0" x2="1" y2="0"><stop offset="0" stopColor="#cfcfcf" /><stop offset="0.4" stopColor="#e2e1e0" /><stop offset="0.85" stopColor="#d5d5d5" /><stop offset="1" stopColor="#f2f2f2" /></linearGradient></defs>
          <ellipse cx="49" cy="24" rx="33" ry="8" fill="#9c9c9c" />
          <path d="M22 25l8-12 8-3 7 8 10-8 8 7 10 1 4 8-12 6H32z" fill="#e8e8e8" />
          <path d="M24 22l7 1 5 7-8-1zM34 20l10-4 4 12zM56 18l9-2 2 10-7 3zM70 20l6 2-4 7z" fill="#474747" /><path d="M36 21l10 1-5 5z" fill="#38b7e6" /><path d="M42 19l6 1-3 3z" fill="#5ccf4a" /><path d="M50 24l4 1-2 7z" fill="#d65f2a" /><path d="M62 20l4 1-1 5z" fill="#2a55b8" />
          <path d="M15 25q34 14 68 0L76 91q-2 7-27 7t-27-7z" fill="url(#bin)" />
          <path d="M15 25q34 14 68 0" fill="none" stroke="#fafafa" strokeWidth="2" />
          <path d="M40 42q14-6 22-2-8 6-22 2z" fill="#f4f4f4" />
          <path d="M22 90q2 8 27 8t27-7" fill="none" stroke="#fff" strokeWidth="2" />
        </DockItem>
      </div>
    </div>
  );
}

export default function App() {
  return (
    <div className="relative h-[1800px] w-[2880px] overflow-hidden bg-black font-['Inter',sans-serif] [text-rendering:geometricPrecision]">
      <Wallpaper />
      <MenuBar />
      <div className="relative flex h-[1640px] w-[2872px] flex-col overflow-hidden rounded-[10px] bg-[#232f3e]">
        <TabStrip />
        <AddressBar />
        <BookmarksBar />
        <div className="flex flex-1 flex-col font-['Liberation_Sans',Arial,sans-serif]">
          <AwsNav />
          <Console />
          <Footer />
        </div>
      </div>
      <Dock />
    </div>
  );
}
